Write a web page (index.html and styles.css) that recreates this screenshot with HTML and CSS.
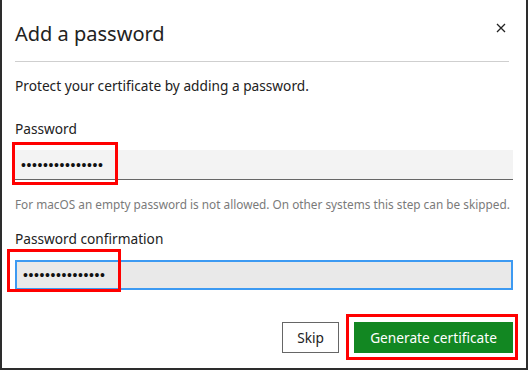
FILE: index.html
```html
<!DOCTYPE html>
<html lang="en">
<head>
    <meta charset="UTF-8">
    <title>Add a password</title>
    <link rel="stylesheet" href="styles.css">
</head>
<body>
    <div class="dialog">
        <div class="dialog-header">
            <h1>Add a password</h1>
            <button class="close" aria-label="Close">
                <svg width="10" height="10" viewBox="0 0 10 10"><path d="M1 1L9 9M9 1L1 9" stroke="#222" stroke-width="1.3" fill="none"/></svg>
            </button>
        </div>

        <div class="dialog-body">
            <p class="intro">Protect your certificate by adding a password.</p>

            <div class="field">
                <label for="pw">Password</label>
                <div class="input-wrap">
                    <input type="password" id="pw" class="input" value="abcdefghijklmno">
                    <span class="mark mark-pw"></span>
                </div>
                <p class="hint">For macOS an empty password is not allowed. On other systems this step can be skipped.</p>
            </div>

            <div class="field">
                <label for="pw2">Password confirmation</label>
                <div class="input-wrap">
                    <input type="password" id="pw2" class="input focused" value="abcdefghijklmno">
                    <span class="mark mark-pw2"></span>
                </div>
            </div>
        </div>

        <div class="dialog-footer">
            <button class="btn btn-secondary">Skip</button>
            <div class="input-wrap">
                <button class="btn btn-primary">Generate certificate</button>
                <span class="mark mark-btn"></span>
            </div>
        </div>
    </div>
</body>
</html>
```

FILE: styles.css
```css
* {
    box-sizing: border-box;
}
body {
    margin: 0;
    background-color: #2d2d2d;
    font-family: 'Noto Sans', sans-serif;
    color: #222;
}
.dialog {
    width: 528px;
    height: 370px;
    background-color: white;
    border: 2px solid #2d2d2d;
    border-top: none;
    display: flex;
    flex-direction: column;
}
.dialog-header {
    display: flex;
    align-items: flex-start;
    justify-content: space-between;
    margin: 0 17px 0 13px;
    padding: 20px 0 14px;
    border-bottom: 1px solid #cfcfcf;
}
h1 {
    margin: 0;
    font-size: 20px;
    font-weight: 400;
    line-height: 27px;
    color: #222;
}
.close {
    border: none;
    background: none;
    padding: 0;
    margin: 3px 3px 0 0;
    width: 10px;
    height: 10px;
    display: flex;
    cursor: pointer;
}
.dialog-body {
    padding: 0 13px;
}
.intro {
    margin: 14px 0 0;
    font-size: 13.7px;
    line-height: 20px;
}
.field {
    margin-top: 23px;
}
label {
    display: block;
    font-size: 13.7px;
    line-height: 20px;
    margin-bottom: 11px;
}
.input-wrap {
    position: relative;
}
.input {
    display: block;
    width: 498px;
    height: 30px;
    padding: 0 6px;
    border: none;
    border-bottom: 1px solid #666;
    background-color: #f3f3f3;
    font-size: 14px;
    color: #111;
    outline: none;
    letter-spacing: 0.6px;
}
.input.focused {
    border: 2px solid #3d9af2;
    background-color: #e9e9e9;
}
.hint {
    margin: 16px 0 0;
    font-size: 11.8px;
    line-height: 16px;
    color: #7a7a7a;
    white-space: nowrap;
}
.dialog-body .field + .field {
    margin-top: 17px;
}
.mark {
    position: absolute;
    border: 3px solid #ff0000;
    pointer-events: none;
}
.mark-pw {
    left: -3px;
    top: -8px;
    width: 106px;
    height: 43px;
}
.mark-pw2 {
    left: -8px;
    top: -11px;
    width: 114px;
    height: 43px;
}
.mark-btn {
    left: -8px;
    top: -8px;
    width: 172px;
    height: 46px;
}
.dialog-footer {
    margin-top: auto;
    display: flex;
    justify-content: flex-end;
    gap: 15px;
    padding: 0 13px 15px;
}
.btn {
    height: 31px;
    font-family: inherit;
    font-size: 13.7px;
    padding: 0 14px;
    cursor: pointer;
}
.btn-secondary {
    background-color: white;
    border: 1px solid #666;
    color: #222;
}
.btn-primary {
    display: block;
    width: 159px;
    background-color: #128722;
    border: none;
    color: white;
}
```
